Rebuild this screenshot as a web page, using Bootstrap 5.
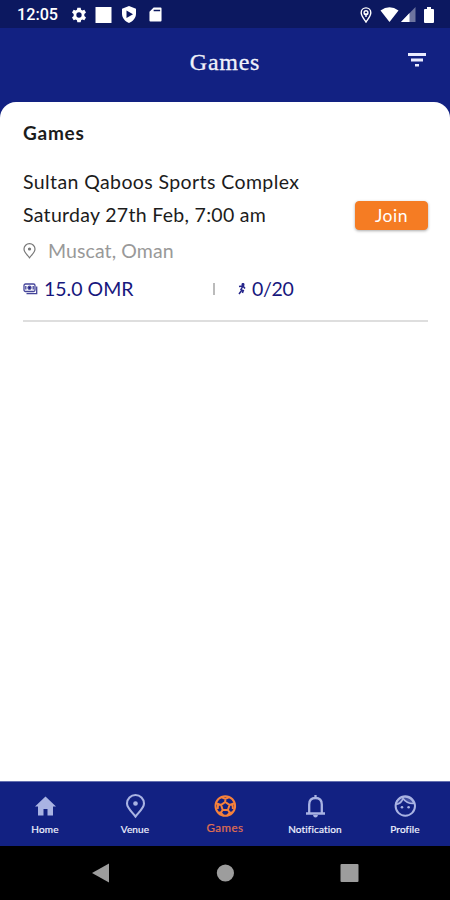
<!DOCTYPE html>
<html lang="en">
<head>
<meta charset="utf-8">
<meta name="viewport" content="width=device-width, initial-scale=1">
<title>Games</title>
<link href="https://cdn.jsdelivr.net/npm/bootstrap@5.3.0/dist/css/bootstrap.min.css" rel="stylesheet">
<style>
  body { font-family: Lato, "Liberation Sans", sans-serif; background: #122182; color: #1c1c1c; height: 900px; overflow: hidden; }
  svg { display: block; flex: none; }
  .status-bar { height: 28px; background: #0c1860; font: 500 16.200px/28px Roboto, sans-serif; padding: 1px 16px 0 17px; }
  .clock { width: 54px; }
  .app-bar { height: 74px; padding: 0 23px; }
  .app-title { font: 24px/1 "Liberation Serif", serif; letter-spacing: .75px; -webkit-text-stroke: .3px #f0f1fa; color: #f0f1fa; padding-bottom: 7px; }
  .side { width: 20px; }
  .filter-icon { margin-bottom: 10px; }
  .sheet { border-radius: 16px 16px 0 0; padding: 0 22px 0 23px; }
  .sheet-title { font-size: 19px; font-weight: 700; line-height: 24px; margin: 19px 0 0; letter-spacing: .75px; }
  .game-line { font-size: 19.5px; line-height: 26px; letter-spacing: .4px; }
  .venue { margin-top: 24px; }
  .when { margin-top: 3px; height: 34px; letter-spacing: .3px; }
  .btn-join { --bs-btn-color: #fff; --bs-btn-bg: #f57c23; --bs-btn-border-color: #f57c23; --bs-btn-hover-bg: #e56f18; --bs-btn-hover-color: #fff; --bs-btn-border-radius: 4px; width: 73px; height: 29px; margin-top: 1px; padding: 0; font-size: 17.5px; letter-spacing: .5px; line-height: 27px; box-shadow: 0 1px 3px #0005; }
  .place { color: #999; margin-top: 6px; height: 26px; letter-spacing: .1px; }
  .facts { color: #17177d; margin-top: 12px; height: 26px; letter-spacing: 0; }
  .fact-price { width: 190px; }
  .price-icon { margin-right: 5px; }
  .players { letter-spacing: -.3px; }
  .fact-split { width: 2px; height: 12px; background: #bbb; }
  .players-icon { margin: 0 6px 0 23px; }
  .divider { height: 2px; background: #dedede; margin-top: 18px; }
  .tabs { height: 65px; border-top: 1px solid #6570b0; color: #a9b3e3; }
  .tab { width: 90px; padding-top: 11px; }
  .tab-label { color: #f1f3ff; font-size: 10px; line-height: 12px; margin-top: 4px; letter-spacing: .15px; -webkit-text-stroke: .2px currentColor; }
  .tab.current { color: #f6813b; }
  .tab.current .tab-label { color: #e07050; font-size: 11.5px; margin-top: 3px; letter-spacing: .5px; }
  .system-bar { height: 54px; color: #9d9d9d; padding: 0 90px; }
</style>
</head>
<body class="d-flex flex-column">
<div class="status-bar d-flex align-items-center text-white">
  <span class="clock">12:05</span>
  <svg width="16" height="16" viewBox="0 0 24 24" fill="currentColor"><path fill-rule="evenodd" d="M9.500 1h5l.6 3.200 1.900 1.100 3-1.200 2.500 4.300-2.500 2.100v3l2.500 2.100-2.500 4.300-3-1.200-1.900 1.100-.6 3.200h-5l-.6-3.200L7 18.700l-3 1.200-2.500-4.300L4 13.500v-3L1.500 8.400 4 4.100l3 1.200 1.900-1.100zM12 8a4 4 0 1 0 0 8 4 4 0 0 0 0-8z"/></svg>
  <svg class="ms-2" width="18" height="16" viewBox="0 0 18 16" fill="currentColor"><path d="M.5 0h16v16H.5z"/></svg>
  <svg class="ms-2" width="16" height="17" viewBox="0 0 16 17" fill="currentColor"><path fill-rule="evenodd" d="M8 0l7 2.800v5C15 12 12 15.500 8 17c-4-1.500-7-5-7-9.200v-5zM5.500 4.500v7.500l6.500-3.700z"/></svg>
  <svg class="ms-2 ps-1" width="17" height="15" viewBox="0 0 14 15" fill="currentColor"><path fill-rule="evenodd" d="M5 0h7.500q1 0 1 1v13q0 1-1 1h-11q-1 0-1-1V4.500zM5 2.500V4h7V2.500z"/></svg>
  <svg class="ms-auto" width="12" height="16" viewBox="0 0 12 16" fill="none" stroke="currentColor" stroke-width="1.400"><path d="M6 15C4 12 1.200 9 1.200 5.700a4.800 4.800 0 0 1 9.600 0C10.800 9 8 12 6 15z"/><circle cx="6" cy="5.700" r="1.900"/><path d="M6 6v4"/></svg>
  <svg class="ms-2" width="19" height="15" viewBox="0 0 19 15" fill="currentColor"><path d="M.5 3.500Q9.500-3 18.500 3.500L9.500 15z"/></svg>
  <svg width="17" height="15" viewBox="0 0 17 15" fill="currentColor"><path opacity=".4" d="M2 15L16.500 0v15z"/><path d="M2 15L10.500 6v9z"/></svg>
  <svg class="ms-2" width="10" height="16" viewBox="0 0 10 16" fill="currentColor"><path d="M3 0h4v2h2q1 0 1 1v12q0 1-1 1H1q-1 0-1-1V3q0-1 1-1h2z"/></svg>
</div>
<header class="app-bar d-flex align-items-center justify-content-between">
  <span class="side"></span>
  <h1 class="app-title m-0">Games</h1>
  <svg class="filter-icon" width="20" height="14" viewBox="0 0 20 14" fill="#e9ebff"><path d="M1 0h18v3H1zM4 5.500h12v3H4zM8 11h4v2.500H8z"/></svg>
</header>
<main class="sheet bg-white flex-grow-1">
  <h2 class="sheet-title">Games</h2>
  <article>
    <div class="game-line venue">Sultan Qaboos Sports Complex</div>
    <div class="game-line when d-flex align-items-center justify-content-between"><span>Saturday 27th Feb, 7:00 am</span><button type="button" class="btn btn-join">Join</button></div>
    <div class="game-line place d-flex align-items-center">
      <svg class="me-2" width="17" height="16" viewBox="0 0 17 16" fill="none" stroke="#777" stroke-width="1.200"><path d="M6.500 14.800C4.500 12 1 9.500 1 6a5.500 5.300 0 0 1 11 0c0 3.500-3.500 6-5.500 8.800z"/><circle cx="6.500" cy="6" r="1" fill="#777"/></svg>
      <span>Muscat, Oman</span>
    </div>
    <div class="game-line facts d-flex align-items-center">
      <span class="fact-price d-flex align-items-center"><svg class="price-icon" width="16" height="12" viewBox="0 0 16 12" fill="none" stroke="#45459a" stroke-width="1.300"><rect x="1" y="1" width="11" height="7.500" rx="1.500"/><path d="M13.700 3.500v7.200H3.500"/><circle cx="6.500" cy="4.700" r="1.500" fill="#17177d"/><path d="M2.800 3v3.500M10.200 3v3.500"/></svg><span>15.0 OMR</span></span>
      <span class="fact-split"></span>
      <svg class="players-icon" width="8" height="12" viewBox="0 0 8 12" fill="none" stroke="#25258a" stroke-width="1.500"><circle cx="5" cy="1.500" r=".8" fill="#25258a"/><path d="M1 3.500l4-.5-2 3.500 3 1.500M5 3l2 2.500M4 7L1 11M5 7.800L4.500 10"/></svg>
      <span class="players">0/20</span>
    </div>
    <div class="divider"></div>
  </article>
</main>
<nav class="tabs d-flex">
  <div class="tab d-flex flex-column align-items-center"><svg width="24" height="26" viewBox="0 0 24 26" fill="currentColor"><path d="M12.500 3.500l10.500 10h-3v9h-5.500v-6.500h-4v6.500H5v-9H2z"/></svg><span class="tab-label">Home</span></div>
  <div class="tab d-flex flex-column align-items-center"><svg width="22" height="26" viewBox="0 0 22 26" fill="none" stroke="currentColor" stroke-width="2.100"><path d="M11.500 23.500C8.500 19.500 3 15 3 10.500a8.500 8.500 0 0 1 17 0c0 4.500-5.500 9-8.500 13z"/><circle cx="11.500" cy="10.500" r="1.300" fill="currentColor"/></svg><span class="tab-label">Venue</span></div>
  <div class="tab current d-flex flex-column align-items-center"><svg width="24" height="26" viewBox="0 0 24 26" fill="none" stroke="currentColor" stroke-width="2"><circle cx="12.300" cy="13" r="9.800"/><path d="M12.300 9l4.200 3-1.600 5H9.700l-1.600-5zM12.300 9V6M16.500 12l3-1M14.900 17l2 2.800M9.700 17l-2 2.800M8.100 12l-3-1M8.300 4.200l4 1.800 4-1.800M21.800 10l-2.300 1 .4 5M2.800 10l2.300 1-.4 5M5.300 19.500l2.500.3 2.300 2.500M19.300 19.500l-2.500.3-2.300 2.500"/></svg><span class="tab-label">Games</span></div>
  <div class="tab d-flex flex-column align-items-center"><svg width="22" height="26" viewBox="0 0 22 26" fill="none" stroke="currentColor" stroke-width="2.300"><path d="M2 20.500h19M5.200 20v-8.500C5.200 7.500 7.500 5 11.500 5s6.300 2.500 6.300 6.500V20M11.500 5V2"/><path d="M9 22h5q-.5 2.500-2.500 2.500T9 22z" fill="currentColor" stroke="none"/></svg><span class="tab-label">Notification</span></div>
  <div class="tab d-flex flex-column align-items-center"><svg width="24" height="26" viewBox="0 0 24 26" fill="none" stroke="currentColor" stroke-width="2"><circle cx="12.300" cy="13" r="9.700"/><path d="M4 8Q9 2 15 4.500q4 1 6 6-7 .5-11-5-1.500 5-7 6z" fill="currentColor" fill-opacity=".3" stroke-width="1.600"/><g fill="currentColor" stroke="none"><circle cx="9" cy="14.300" r="1.300"/><circle cx="15.600" cy="14.300" r="1.300"/></g></svg><span class="tab-label">Profile</span></div>
</nav>
<div class="system-bar bg-black d-flex align-items-center justify-content-between">
  <svg width="20" height="20" viewBox="0 0 20 20" fill="currentColor"><path d="M2 10L19 .5v19z"/></svg>
  <svg width="18" height="18" viewBox="0 0 18 18" fill="currentColor"><circle cx="9.400" cy="9" r="8.600"/></svg>
  <svg width="20" height="20" viewBox="0 0 20 20" fill="currentColor"><rect x=".5" y="1" width="18" height="18" rx="1"/></svg>
</div>
<script src="https://cdn.jsdelivr.net/npm/bootstrap@5.3.0/dist/js/bootstrap.bundle.min.js"></script>
</body>
</html>
